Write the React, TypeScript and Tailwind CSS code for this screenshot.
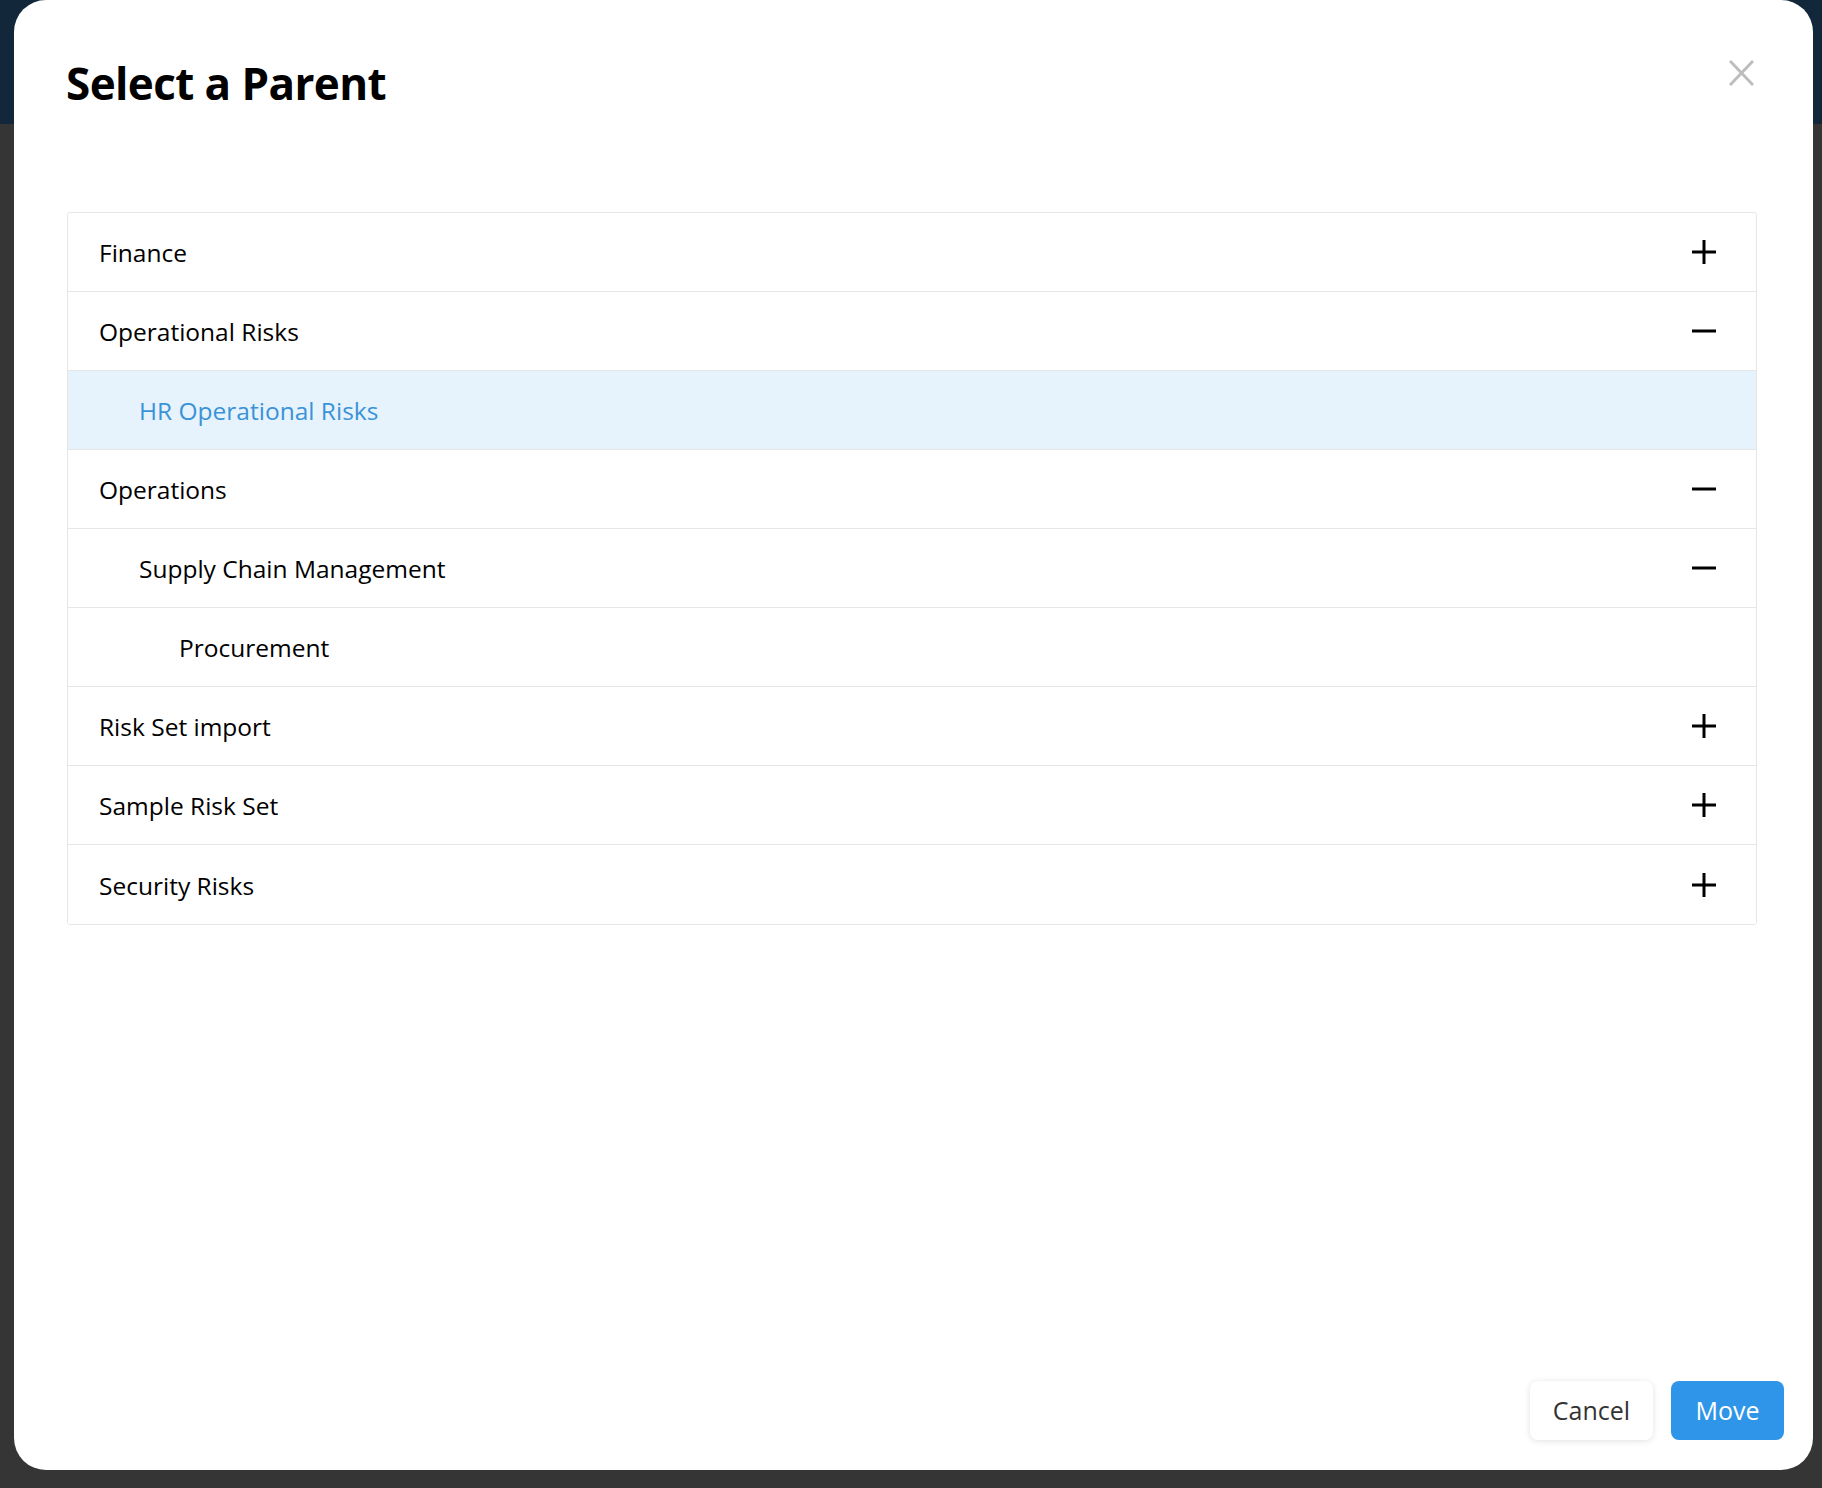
import React from "react"

type Node = {
  label: string
  level: number
  toggle?: "plus" | "minus"
  selected?: boolean
}

const nodes: Node[] = [
  { label: "Finance", level: 0, toggle: "plus" },
  { label: "Operational Risks", level: 0, toggle: "minus" },
  { label: "HR Operational Risks", level: 1, selected: true },
  { label: "Operations", level: 0, toggle: "minus" },
  { label: "Supply Chain Management", level: 1, toggle: "minus" },
  { label: "Procurement", level: 2 },
  { label: "Risk Set import", level: 0, toggle: "plus" },
  { label: "Sample Risk Set", level: 0, toggle: "plus" },
  { label: "Security Risks", level: 0, toggle: "plus" },
]

const indent = ["pl-[31px]", "pl-[71px]", "pl-[111px]"]

function ToggleIcon({ kind }: { kind: "plus" | "minus" }) {
  return (
    <svg width="24" height="24" viewBox="0 0 24 24" className="text-black">
      <line x1="0" y1="12" x2="24" y2="12" stroke="currentColor" strokeWidth="3" />
      {kind === "plus" && <line x1="12" y1="0" x2="12" y2="24" stroke="currentColor" strokeWidth="3" />}
    </svg>
  )
}

function TreeRow({ node }: { node: Node }) {
  return (
    <div
      className={`flex h-[79px] items-center justify-between pr-[40px] border-b border-[#e6e6e6] last:border-b-0 ${indent[node.level]} ${
        node.selected ? "bg-[#e6f2fc] text-[#3a92d8]" : "bg-white text-black"
      }`}
    >
      <span className="pt-[3px] text-[24.5px]">{node.label}</span>
      {node.toggle && <ToggleIcon kind={node.toggle} />}
    </div>
  )
}

export default function App() {
  return (
    <div className="relative h-[1488px] w-full overflow-hidden bg-[#353535] font-['Open_Sans',_'Noto_Sans',_sans-serif]">
      <div className="h-[124px] bg-[#13273b]" />

      <div className="absolute left-[14px] top-0 flex h-[1470px] w-[1799px] flex-col rounded-[32px] bg-white">
        <div className="flex items-start justify-between pl-[52px] pr-[59px] pt-[55px]">
          <h2 className="text-[44px] font-bold leading-[56px] tracking-[-0.6px] text-black">Select a Parent</h2>
          <button className="mt-[5px] text-[#bdbdbd]">
            <svg width="25" height="26" viewBox="0 0 25 26">
              <line x1="1" y1="1" x2="24" y2="25" stroke="currentColor" strokeWidth="3" />
              <line x1="24" y1="1" x2="1" y2="25" stroke="currentColor" strokeWidth="3" />
            </svg>
          </button>
        </div>

        <div className="ml-[53px] mr-[56px] mt-[101px] overflow-hidden rounded-[3px] border border-[#e6e6e6]">
          {nodes.map((n) => (
            <TreeRow key={n.label} node={n} />
          ))}
        </div>

        <div className="mt-auto flex justify-end gap-[18px] pb-[30px] pr-[29px]">
          <button className="h-[59px] w-[123px] rounded-[8px] bg-white text-[25px] text-[#333] shadow-[0_1px_6px_rgba(0,0,0,0.12)]">
            Cancel
          </button>
          <button className="h-[59px] w-[113px] rounded-[8px] bg-[#2f95e8] text-[25px] text-white">
            Move
          </button>
        </div>
      </div>
    </div>
  )
}
